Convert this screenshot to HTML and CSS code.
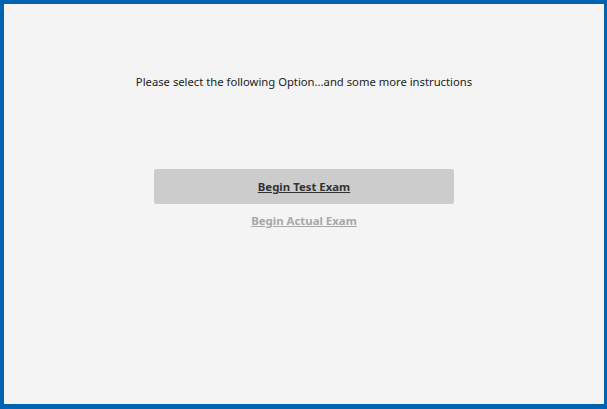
FILE: index.html
```html
<!DOCTYPE html>
<html>
<head>
<meta charset="utf-8">
<link rel="stylesheet" href="styles.css">
</head>
<body>
<div class="frame">
  <p class="instructions">Please select the following Option...and some more instructions</p>
  <div class="actions">
    <a class="btn-primary" href="#">Begin Test Exam</a>
    <a class="link-secondary" href="#">Begin Actual Exam</a>
  </div>
</div>
</body>
</html>
```
FILE: styles.css
```css
html, body {
  margin: 0;
  padding: 0;
}
body {
  font-family: "Noto Sans", "Open Sans", sans-serif;
  font-size: 11.25px;
}
.frame {
  box-sizing: border-box;
  width: 607px;
  height: 409px;
  border-style: solid;
  border-color: #0063b1;
  border-width: 4px 3px 5px 4px;
  background: #f4f4f4;
  display: flex;
  flex-direction: column;
  align-items: center;
}
.instructions {
  margin: 70px 0 0 0;
  color: #222;
  line-height: 16px;
}
.actions {
  margin-top: 79px;
  display: flex;
  flex-direction: column;
  align-items: center;
  gap: 9px;
}
.btn-primary {
  display: flex;
  align-items: center;
  justify-content: center;
  width: 300px;
  height: 35px;
  background: #cccccc;
  border-radius: 2px;
  color: #333;
  font-weight: bold;
  font-size: 11.4px;
  text-decoration: underline;
}
.link-secondary {
  color: #a8a8a8;
  font-weight: bold;
  font-size: 11.4px;
  text-decoration: underline;
  line-height: 16px;
}
```
